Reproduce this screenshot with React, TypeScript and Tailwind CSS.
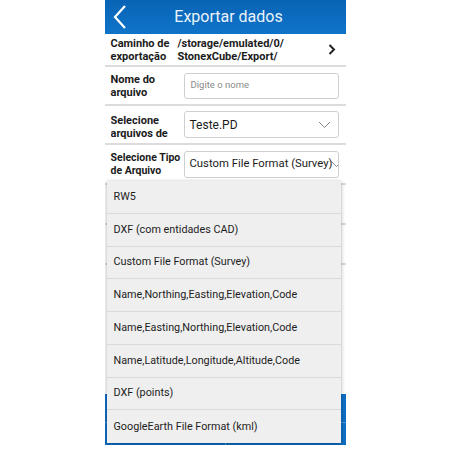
import React from 'react';

const items = [
  'RW5',
  'DXF (com entidades CAD)',
  'Custom File Format (Survey)',
  'Name,Northing,Easting,Elevation,Code',
  'Name,Easting,Northing,Elevation,Code',
  'Name,Latitude,Longitude,Altitude,Code',
  'DXF (points)',
  'GoogleEarth File Format (kml)',
];

function ChevronDown() {
  return (
    <svg width="13" height="8" viewBox="0 0 13 8" className="shrink-0">
      <path d="M1 1 L6.5 6.5 L12 1" fill="none" stroke="#888" strokeWidth="1" />
    </svg>
  );
}

export default function App() {
  return (
    <div className="w-[450px] h-[450px] bg-white flex justify-center" style={{ fontFamily: 'Roboto, "Liberation Sans", sans-serif' }}>
      <div className="w-[241px] h-[445px] relative bg-white flex flex-col overflow-hidden">
        {/* Header */}
        <div className="h-[34px] shrink-0 bg-gradient-to-b from-[#0963b5] to-[#0f74c9] flex items-center relative">
          <svg width="14" height="24" viewBox="0 0 14 24" className="absolute left-[8px] top-[5px]">
            <path d="M12 1 L2 12 L12 23" fill="none" stroke="#fff" strokeWidth="2.2" />
          </svg>
          <div className="w-full text-center text-[16px] text-[#eaf3fb] pl-[7px]">Exportar dados</div>
        </div>

        {/* Row: path */}
        <div className="h-[33px] shrink-0 flex items-center px-[6px] border-b-2 border-[#dcdcdc]">
          <div className="w-[67px] whitespace-nowrap text-[11px] leading-[13px] font-bold text-[#1b1b1b]">Caminho de<br />exportação</div>
          <div className="flex-1 text-[11px] leading-[13px] font-bold text-[#1b1b1b]">/storage/emulated/0/<br />StonexCube/Export/</div>
          <svg width="8" height="11" viewBox="0 0 8 11" className="mr-[4px]">
            <path d="M1.5 1 L6 5.5 L1.5 10" fill="none" stroke="#222" strokeWidth="2" />
          </svg>
        </div>

        {/* Row: name */}
        <div className="h-[39px] shrink-0 flex items-center px-[6px] border-b-2 border-[#dcdcdc]">
          <div className="w-[73px] whitespace-nowrap text-[11px] leading-[13px] font-bold text-[#1b1b1b]">Nome do<br />arquivo</div>
          <div className="w-[155px] h-[26px] border border-[#cfcfcf] rounded-[3px] flex items-center px-[6px] text-[9.5px] text-[#8a8a8a]">Digite o nome</div>
        </div>

        {/* Row: files */}
        <div className="h-[39px] shrink-0 flex items-center px-[6px] border-b-2 border-[#dcdcdc] overflow-hidden">
          <div className="w-[73px] h-[34px] pt-[6px] whitespace-nowrap text-[11px] leading-[13px] font-bold text-[#1b1b1b] overflow-hidden">Selecione<br />arquivos de<br />dados</div>
          <div className="w-[155px] h-[27px] border border-[#cfcfcf] rounded-[3px] flex items-center justify-between pl-[5px] pr-[7px] text-[12px] text-[#1b1b1b]">
            <span>Teste.PD</span>
            <ChevronDown />
          </div>
        </div>

        {/* Row: type */}
        <div className="h-[40px] shrink-0 flex items-center px-[6px] border-b-2 border-[#dcdcdc]">
          <div className="w-[73px] whitespace-nowrap text-[10.5px] leading-[13px] font-bold text-[#1b1b1b]">Selecione Tipo<br />de Arquivo</div>
          <div className="w-[155px] h-[27px] border border-[#cfcfcf] rounded-[3px] flex items-center pl-[5px] text-[11.3px] text-[#1b1b1b] whitespace-nowrap overflow-hidden">
            <span>Custom File Format (Survey)</span>
            <span className="-ml-[2px]"><ChevronDown /></span>
          </div>
        </div>

        {/* Hidden rows behind dropdown */}
        <div className="h-[40px] shrink-0 border-b-2 border-[#dcdcdc]" />
        <div className="h-[40px] shrink-0 border-b-2 border-[#dcdcdc]" />
        <div className="flex-1" />

        {/* Bottom bar */}
        <div className="h-[51px] shrink-0 bg-[#0f6fc4] flex flex-col">
          <div className="h-[29px] border-b border-[#4a93d4]" />
          <div className="flex-1 flex">
            <div className="flex-1 border-r border-[#4a93d4]" />
            <div className="flex-1" />
          </div>
        </div>

        {/* Dropdown */}
        <div className="absolute left-[2px] top-[181px] w-[234px] bg-[#efefef] shadow-[0_1px_4px_rgba(0,0,0,0.35)] flex flex-col">
          {items.map((it, i) => (
            <div
              key={it}
              className={`h-[32.75px] flex items-center px-[7px] text-[10.8px] text-[#1d1d1d] ${i < items.length - 1 ? 'border-b border-[#dadada]' : ''}`}
            >
              {it}
            </div>
          ))}
        </div>
      </div>
    </div>
  );
}
